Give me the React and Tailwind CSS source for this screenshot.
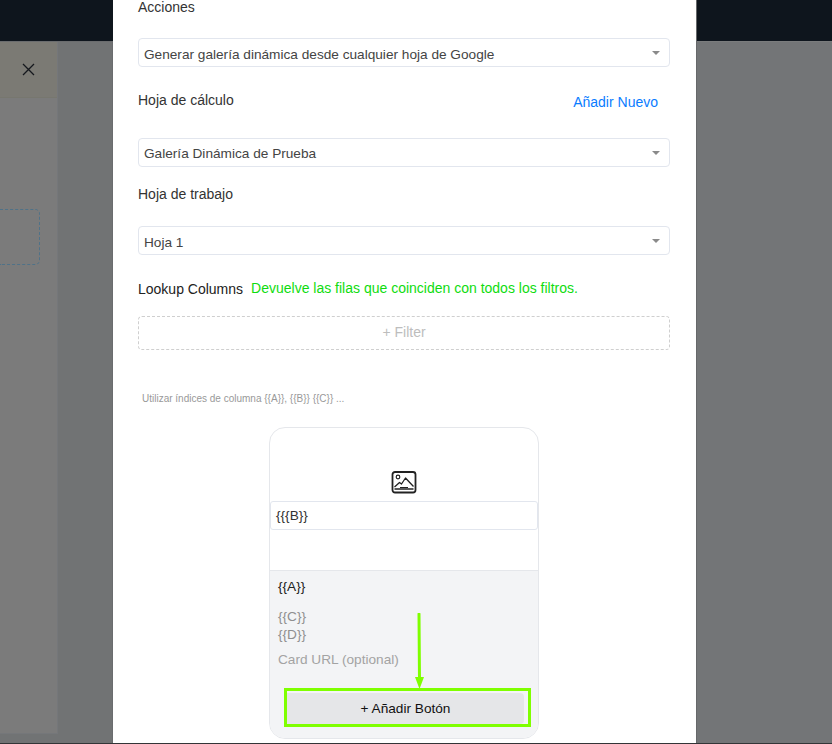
function Caret() {
  return <span className="absolute right-[9px] top-[12px] w-0 h-0 border-x-[4px] border-x-transparent border-t-[4px] border-t-[#8a8a8a]"></span>;
}

function SelectBox({ value, lineClass }) {
  return (
    <div className={"relative h-[29px] w-[532px] rounded-[4px] border border-[#e2e6ee] bg-white pl-[5px] text-[13.65px] text-[#444] " + lineClass}>
      {value}
      <Caret />
    </div>
  );
}

function ImageIcon() {
  return (
    <svg width="26" height="23" viewBox="0 0 26 23" fill="none" stroke="#222" strokeWidth="1.6" strokeLinejoin="round">
      <rect x="1.5" y="1" width="23" height="20.5" rx="2.5" strokeWidth="1.8" />
      <circle cx="7" cy="6" r="1.8" strokeWidth="1.2" />
      <path d="M3.5 16 L8.5 11.5 L10.5 13 L14.5 7 L22.5 15.5" strokeWidth="1.3" />
      <path d="M3.5 18 L22.5 18" strokeWidth="1.5" />
      <path d="M9 16.5 L17 16.5" strokeWidth="1" />
    </svg>
  );
}

function GalleryCard() {
  return (
    <div className="relative ml-[131px] h-[312px] w-[270px] overflow-hidden rounded-[16px] border border-[#e5e7eb] bg-white">
      <div className="h-[143px] border-b border-[#e5e7eb] pt-[43px]">
        <div className="flex justify-center pr-[1px]"><ImageIcon /></div>
        <div className="mt-[7px] h-[29px] w-[268px] rounded-[3px] border border-[#e2e6ee] pl-[5px] text-[13.65px] leading-[27px] text-[#333]">{"{{{B}}"}</div>
      </div>
      <div className="h-[168px] bg-[#f3f4f6] px-[8px] text-[13.65px]">
        <div className="pt-[7px] leading-[18px] text-[#222]">{"{{A}}"}</div>
        <div className="mt-[12px] leading-[18px] text-[#8f8f8f]">{"{{C}}"}</div>
        <div className="leading-[18px] text-[#8f8f8f]">{"{{D}}"}</div>
        <div className="mt-[7px] leading-[18px] text-[#a3a3a3]">Card URL (optional)</div>
        <div className="ml-[6px] mt-[19px] h-[39px] w-[247px] border-[3px] border-[#7fff00] pt-[2px] pr-[4px]">
          <div className="h-[31px] rounded-r-[4px] bg-[#e5e6e8] text-center text-[13.65px] leading-[32px] text-[#111]">+ Añadir Botón</div>
        </div>
      </div>
      <svg className="absolute left-[143px] top-[185px]" width="14" height="78" viewBox="0 0 14 78" fill="none">
        <path d="M6 1 L6.5 68" stroke="#7fff00" strokeWidth="3" strokeLinecap="round" />
        <path d="M2 64 H11 L6.5 76 Z" fill="#7fff00" />
      </svg>
    </div>
  );
}

function Modal() {
  return (
    <div className="h-[743px] w-[583px] shrink-0 overflow-hidden bg-white pl-[25px] font-['Liberation_Sans',Arial,sans-serif]">
      <div className="-mt-[3px] text-[14px] leading-[20px] text-[#333]">Acciones</div>
      <div className="mt-[21px]"><SelectBox value="Generar galería dinámica desde cualquier hoja de Google" lineClass="leading-[32px]" /></div>
      <div className="mt-[23px] flex h-[20px] w-[532px] justify-between text-[14px] leading-[20px] text-[#333]">
        <span>Hoja de cálculo</span>
        <span className="mt-[2px] mr-[12px] text-[#0a7cff]">Añadir Nuevo</span>
      </div>
      <div className="mt-[28px]"><SelectBox value="Galería Dinámica de Prueba" lineClass="leading-[30px]" /></div>
      <div className="mt-[17px] text-[14px] leading-[20px] text-[#333]">Hoja de trabajo</div>
      <div className="mt-[22px]"><SelectBox value="Hoja 1" lineClass="leading-[32px]" /></div>
      <div className="mt-[24px] flex h-[20px] items-center text-[14px] leading-[20px]">
        <span className="text-[#222]">Lookup Columns</span>
        <span className="ml-[8px] -mt-[2px] text-[#0fdc0f]">Devuelve las filas que coinciden con todos los filtros.</span>
      </div>
      <div className="mt-[17px] h-[34px] w-[532px] rounded-[4px] border border-dashed border-[#cfcfcf] text-center text-[14px] leading-[30px] text-[#bdbdbd]">+ Filter</div>
      <div className="mt-[42px] pl-[4px] text-[10px] leading-[14px] text-[#999]">Utilizar índices de columna {"{{A}}, {{B}} {{C}} ..."}</div>
      <div className="mt-[21px]"><GalleryCard /></div>
    </div>
  );
}

function LeftSide() {
  return (
    <div className="h-[702px] w-[113px] shrink-0 border-t border-r border-[#6a6c6e] bg-[#717374]">
      <div className="flex h-[692px] w-[58px] flex-col border-r border-b border-[#75777a] bg-[#7b7b7b]">
        <div className="relative h-[56px] border-b border-[#77776f] bg-[#7b7a74]">
          <svg className="absolute left-[22px] top-[21px]" width="13" height="13" viewBox="0 0 13 13" stroke="#15181d" strokeWidth="1.3" fill="none">
            <path d="M1 1 L12 12 M12 1 L1 12" />
          </svg>
        </div>
        <div className="mt-[111px] h-[56px] w-[40px] rounded-r-[5px] border-y border-r border-dashed border-[#4f7288]"></div>
      </div>
    </div>
  );
}

export default function App() {
  return (
    <div className="h-[744px] w-[832px] overflow-hidden bg-[#717374]">
      <div className="flex h-[743px]">
        <div className="flex w-[113px] shrink-0 flex-col">
          <div className="h-[41px] bg-[#0e151d]"></div>
          <LeftSide />
        </div>
        <Modal />
        <div className="flex flex-1 flex-col border-l border-[#66686a]">
          <div className="h-[41px] bg-[#0e151d]"></div>
          <div className="flex-1 border-t border-[#7a7c7d] bg-[#737577]"></div>
        </div>
      </div>
      <div className="h-[1px] bg-[#333537]"></div>
    </div>
  );
}
